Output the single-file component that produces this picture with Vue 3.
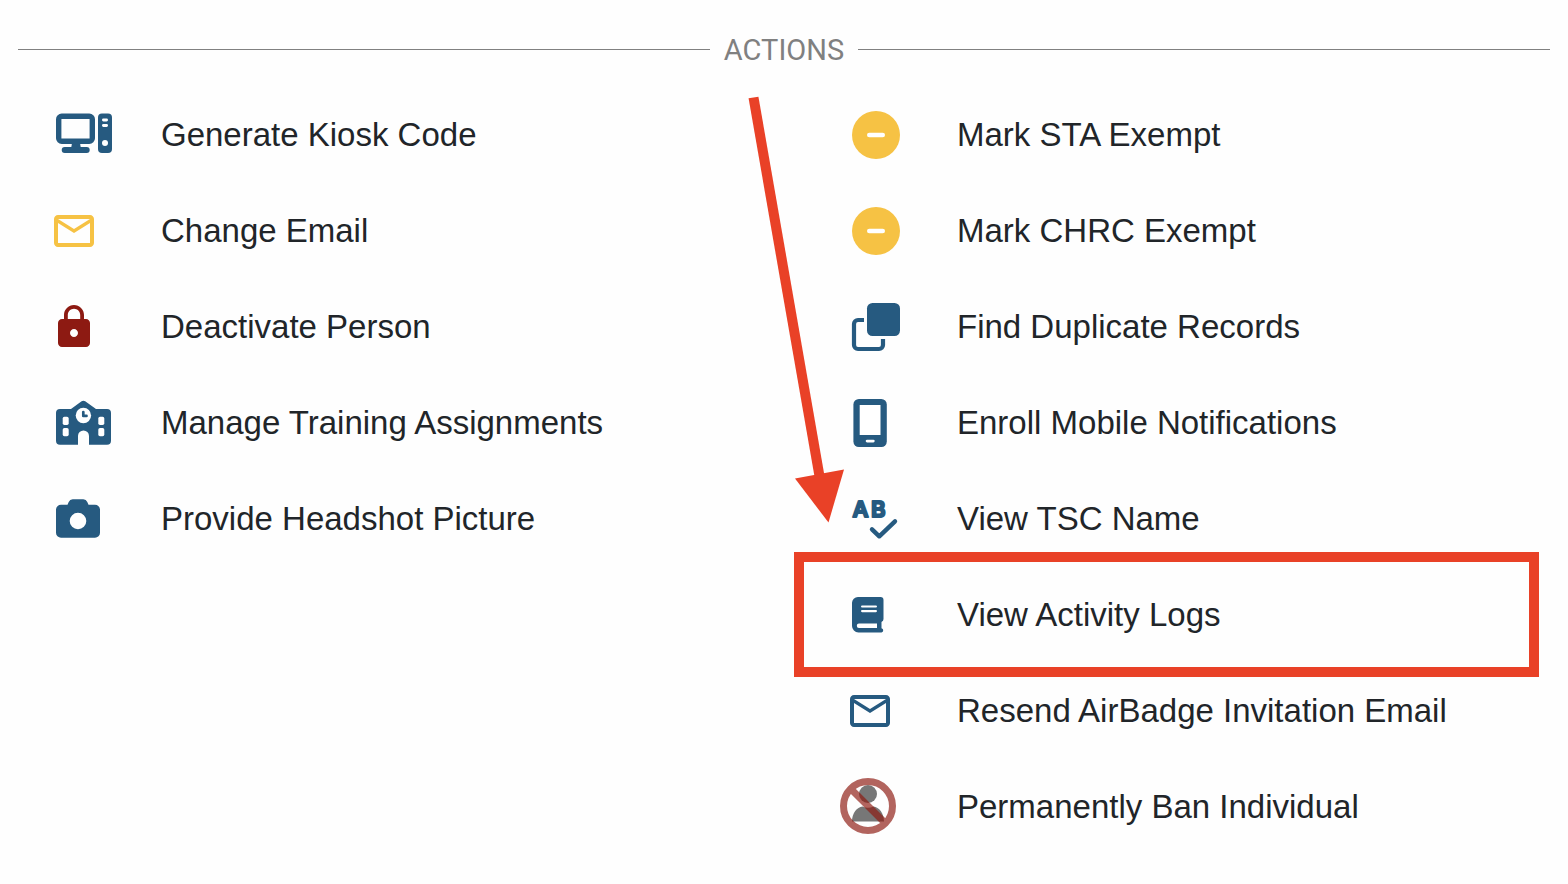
<script setup>
const columns = [
  [
    { icon: 'kiosk', label: 'Generate Kiosk Code' },
    { icon: 'mail', tone: 'yellow', label: 'Change Email' },
    { icon: 'lock', tone: 'maroon', label: 'Deactivate Person' },
    { icon: 'school', label: 'Manage Training Assignments' },
    { icon: 'camera', label: 'Provide Headshot Picture' },
  ],
  [
    { icon: 'minus', tone: 'yellow', label: 'Mark STA Exempt' },
    { icon: 'minus', tone: 'yellow', label: 'Mark CHRC Exempt' },
    { icon: 'duplicate', label: 'Find Duplicate Records' },
    { icon: 'phone', label: 'Enroll Mobile Notifications' },
    { icon: 'spellcheck', label: 'View TSC Name' },
    { icon: 'book', label: 'View Activity Logs', highlighted: true },
    { icon: 'mail', label: 'Resend AirBadge Invitation Email' },
    { icon: 'ban', tone: 'maroon', label: 'Permanently Ban Individual' },
  ],
]
</script>

<template>
  <main class="panel">
    <h2 class="heading">Actions</h2>
    <div class="columns">
      <div v-for="(items, index) in columns" :key="index" class="column">
        <ul class="list">
          <li v-for="item in items" :key="item.label" class="row">
            <button type="button" class="action">
              <svg class="icon" :class="item.tone" viewBox="0 0 72 72" aria-hidden="true">
                <g v-if="item.icon === 'kiosk'">
                  <rect x="18.7" y="17.3" width="33.6" height="25" rx="3" fill="none" stroke="currentColor" stroke-width="5.4" />
                  <path d="M32 44h8l1 6H31z" />
                  <rect x="21.7" y="48" width="28" height="6" rx="3" />
                  <rect x="58" y="14.6" width="14" height="39.4" rx="4" />
                  <g fill="#fff">
                    <rect x="62" y="19.6" width="6" height="2.900" rx="1.400" />
                    <rect x="62" y="25.1" width="6" height="2.900" rx="1.400" />
                    <circle cx="65" cy="44" r="3" />
                  </g>
                </g>
                <g v-else-if="item.icon === 'mail'" transform="translate(10 12) scale(2)">
                  <path d="M22 6c0-1.1-.9-2-2-2H4c-1.1 0-2 .9-2 2v12c0 1.1.9 2 2 2h16c1.1 0 2-.9 2-2V6zm-2 0-8 5-8-5h16zm0 12H4V8l8 5 8-5v10z" />
                </g>
                <g v-else-if="item.icon === 'lock'" transform="translate(10 12) scale(2)">
                  <path d="M18 8h-1V6c0-2.76-2.24-5-5-5S7 3.24 7 6v2H6c-1.1 0-2 .9-2 2v10c0 1.1.9 2 2 2h12c1.1 0 2-.9 2-2V10c0-1.1-.9-2-2-2zm-6 9c-1.1 0-2-.9-2-2s.9-2 2-2 2 .9 2 2-.9 2-2 2zM15.1 8H8.9V6c0-1.71 1.39-3.1 3.1-3.1s3.1 1.39 3.1 3.1v2z" />
                </g>
                <g v-else-if="item.icon === 'school'">
                  <path d="M20 22H31L41.6 14.3a3 3 0 0 1 3.6 0L56 22H67a4 4 0 0 1 4 4V53.7a4 4 0 0 1-4 4H49V49a5.5 5.5 0 0 0-11 0V57.7H20a4 4 0 0 1-4-4V26a4 4 0 0 1 4-4z" />
                  <g fill="#fff">
                    <rect x="22.7" y="29.7" width="6" height="8.3" rx="1.7" />
                    <rect x="22.7" y="41" width="6" height="8.3" rx="1.7" />
                    <rect x="58.3" y="29.7" width="6" height="8.3" rx="1.7" />
                    <rect x="58.3" y="41" width="6" height="8.3" rx="1.7" />
                    <circle cx="43.4" cy="28.5" r="7.7" />
                  </g>
                  <path d="M43.3 25v3.9h3.2" fill="none" stroke="currentColor" stroke-width="2.7" stroke-linecap="round" stroke-linejoin="round" />
                </g>
                <g v-else-if="item.icon === 'camera'">
                  <path fill-rule="evenodd" d="M21 21.7h6.5l1.2-2.7a4.5 4.5 0 0 1 4-2.8h10.6a4.5 4.5 0 0 1 4 2.8l1.2 2.7H55a5 5 0 0 1 5 5V49.7a5 5 0 0 1-5 5H21a5 5 0 0 1-5-5V26.7a5 5 0 0 1 5-5zM38 29.7a8.3 8.3 0 1 0 0 16.6a8.3 8.3 0 1 0 0-16.6z" />
                </g>
                <g v-else-if="item.icon === 'minus'">
                  <circle cx="40" cy="36" r="24" />
                  <rect x="31" y="33.7" width="18" height="4.6" rx="2.3" fill="#fff" />
                </g>
                <g v-else-if="item.icon === 'duplicate'">
                  <rect x="31" y="12" width="33" height="33" rx="5.5" />
                  <path d="M28 29H22a4 4 0 0 0-4 4V54a4 4 0 0 0 4 4H43a4 4 0 0 0 4-4V48" fill="none" stroke="currentColor" stroke-width="4.2" />
                </g>
                <g v-else-if="item.icon === 'phone'">
                  <rect x="17.4" y="12" width="33.4" height="48" rx="5.5" />
                  <rect x="23.7" y="18" width="20.8" height="30" fill="#fff" />
                  <rect x="29.7" y="52.7" width="9" height="2.8" rx="1.4" fill="#fff" />
                </g>
                <g v-else-if="item.icon === 'spellcheck'">
                  <text x="16.5 35" y="34" class="letters">AB</text>
                  <path d="M36 46.3 43.3 53.3 59 38.3" fill="none" stroke="currentColor" stroke-width="4.4" stroke-linecap="round" stroke-linejoin="round" />
                </g>
                <g v-else-if="item.icon === 'book'">
                  <path d="M22 18H44.5a3 3 0 0 1 3 3V40a3 3 0 0 1-2 2.9V49.2a2.2 2.2 0 0 1 0 4.3H22.5a6.5 6.5 0 0 1-6.5-6.5V24a6 6 0 0 1 6-6z" />
                  <g fill="#fff">
                    <rect x="25" y="26.4" width="16" height="2.2" rx="1.1" />
                    <rect x="25" y="31" width="16" height="2.2" rx="1.1" />
                    <path d="M23 44.6H41V49H23a2.2 2.2 0 0 1 0-4.4z" />
                  </g>
                </g>
                <g v-else>
                  <g fill="#777">
                    <circle cx="32" cy="23" r="9" />
                    <path d="M16 50.5C16 42 21 36.2 26.500 35.500Q32 38 37.500 35.500C43 36.200 48 42 48 50.500z" />
                  </g>
                  <g fill="none" stroke="currentColor" stroke-width="7" opacity=".68">
                    <path d="M32 10.5a24.5 24.5 0 1 0 0 49a24.5 24.5 0 1 0 0-49zM14.7 17.7 49.3 52.3" />
                  </g>
                </g>
              </svg>
              <span>{{ item.label }}</span>
            </button>
            <div v-if="item.highlighted" class="highlight"></div>
          </li>
        </ul>
        <svg v-if="index === 1" class="arrow" viewBox="0 0 100 430" aria-hidden="true">
          <path d="M3.5 0.5 70 382" fill="none" stroke="currentColor" stroke-width="10" />
          <path d="M45 381.5 94 372.5 78.5 425.5z" />
        </svg>
      </div>
    </div>
  </main>
</template>

<style>
body {
  margin: 0;
  background: #fefefe;
}
</style>

<style scoped>
.panel {
  padding: 31px 18px 20px;
  color: #212529;
  font-family: "Liberation Sans", Arial, sans-serif;
}

.heading {
  display: flex;
  align-items: center;
  gap: 14px;
  margin: 0 0 18px;
  color: #808080;
  font-family: Roboto, sans-serif;
  font-size: 29px;
  font-weight: 400;
  line-height: 38px;
  text-transform: uppercase;
}

.heading::before,
.heading::after {
  content: "";
  flex: 1;
  height: 1px;
  margin-bottom: 2px;
  background: #808080;
}

.columns {
  display: grid;
  grid-template-columns: 1fr 1fr;
  gap: 60px;
}

.column {
  position: relative;
}

.list {
  margin: 0;
  padding: 0;
  list-style: none;
}

.row {
  position: relative;
}

.action {
  display: flex;
  align-items: center;
  gap: 49px;
  width: 100%;
  min-height: 96px;
  padding: 0 0 0 22px;
  border: 0;
  background: transparent;
  color: inherit;
  font-family: inherit;
  font-size: 33px;
  line-height: 40px;
  text-align: left;
  cursor: pointer;
}

.icon {
  flex: none;
  width: 72px;
  height: 72px;
  color: #265a80;
  fill: currentColor;
}

.icon.yellow {
  color: #f6c244;
}

.icon.maroon {
  color: #8d1a12;
}

.letters {
  font-family: Inter, sans-serif;
  font-size: 22px;
  font-weight: 600;
  stroke: currentColor;
  stroke-width: 2;
  stroke-linejoin: round;
}

.highlight {
  position: absolute;
  inset: -15px 11px -14px -20px;
  border: 10px solid #e94127;
  pointer-events: none;
}

.arrow {
  position: absolute;
  top: 10px;
  left: -64px;
  width: 100px;
  height: 430px;
  overflow: visible;
  color: #e94127;
  fill: currentColor;
  pointer-events: none;
}
</style>
